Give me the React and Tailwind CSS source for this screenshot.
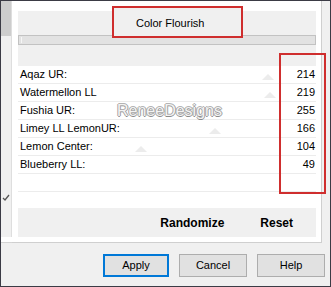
import React from "react";

const rows = [
  { label: "Aqaz UR:", value: "214", tri: 268 },
  { label: "Watermellon LL", value: "219", tri: 270 },
  { label: "Fushia UR:", value: "255", tri: null },
  { label: "Limey LL LemonUR:", value: "166", tri: 215 },
  { label: "Lemon Center:", value: "104", tri: 141 },
  { label: "Blueberry LL:", value: "49", tri: null },
  { label: "", value: "", tri: null },
];

function Tri({ cx }) {
  return (
    <svg
      className="absolute bottom-[3px]"
      style={{ left: cx - 18 - 6 }}
      width="12"
      height="6"
      viewBox="0 0 12 6"
    >
      <polygon points="0,6 6,0 12,6" fill="#ececec" />
    </svg>
  );
}

export default function App() {
  return (
    <div className="relative w-[331px] h-[287px] bg-[#f0f0f0] border border-[#3b3b45] flex flex-col overflow-hidden font-['Liberation_Sans',Arial,sans-serif] text-black">
      {/* top section */}
      <div className="flex h-[242px]">
        {/* left strip */}
        <div className="w-[10px] flex flex-col">
          <div className="h-[35px] bg-[#cdcdcd]" />
          <div className="h-[201px] bg-[#f0f0f0] relative">
            <svg className="absolute left-[1px] top-[158px]" width="8" height="7" viewBox="0 0 8 7">
              <path d="M1 4 L3 6 L7 1" stroke="#555" strokeWidth="1.3" fill="none" />
            </svg>
          </div>
          <div className="flex-1 bg-white border-b border-[#d4d4d4]" />
        </div>
        <div className="w-px flex flex-col">
          <div className="h-[236px] bg-[#dedede]" />
          <div className="flex-1 bg-white border-b border-[#d4d4d4]" />
        </div>
        {/* main */}
        <div className="w-[310px] bg-white border-r border-b border-[#cfcfcf] pl-[6px] pr-[5px] pt-[10px] flex flex-col">
          <div className="bg-[#f0f0f0] h-[24px]" />
          <div className="h-[10px] bg-[#e2e2e2] border border-[#c2c2c2] relative">
            <div className="absolute left-[2px] top-[1px] w-px h-[6px] bg-[#f6f6f6]" />
          </div>
          <div className="bg-[#f0f0f0] h-[21px]" />
          <div className="flex flex-col">
            {rows.map((r, i) => (
              <div
                key={i}
                className="relative h-[18px] border-b border-[#ececec] flex items-center justify-between pl-[2px] pr-[1px] text-[11px] leading-none"
              >
                {r.tri && <Tri cx={r.tri} />}
                <span className="relative">{r.label}</span>
                <span className="relative">{r.value}</span>
              </div>
            ))}
          </div>
          <div className="h-[16px]" />
          <div className="h-[29px] bg-[#f0f0f0] flex items-center justify-end pr-[23px] gap-[36px] text-[12px] font-bold">
            <span>Randomize</span>
            <span>Reset</span>
          </div>
          <div className="flex-1" />
        </div>
        <div className="flex-1 bg-[#f0f0f0]" />
      </div>
      {/* buttons */}
      <div className="flex-1 flex justify-end items-start pt-[11px] pr-[5px] gap-[10px] text-[11px]">
        <button className="w-[66px] h-[23px] bg-[#e1e1e1] border-2 border-[#0078d7] flex items-center justify-center">
          Apply
        </button>
        <button className="w-[68px] h-[23px] bg-[#e1e1e1] border border-[#adadad] flex items-center justify-center">
          Cancel
        </button>
        <button className="w-[68px] h-[23px] bg-[#e1e1e1] border border-[#adadad] flex items-center justify-center">
          Help
        </button>
      </div>

      {/* watermark */}
      <div className="absolute left-[116px] top-[101px] text-[16px] leading-[18px] text-[#f3f3f3] [text-shadow:1px_0_0_#a0a0a0,-1px_0_0_#a8a8a8,0_1px_0_#8a8a8a,0_-1px_0_#b4b4b4]">
        ReneeDesigns
      </div>

      {/* title highlight box */}
      <div className="absolute left-[111px] top-[5px] w-[131px] h-[32px] border-2 border-[#cf2e2e] bg-[#f0f0f0] flex items-center pl-[22px] pt-[2px] text-[11px]">
        Color Flourish
      </div>

      {/* numbers highlight box */}
      <div className="absolute left-[278px] top-[52px] w-[47px] h-[141px] border-2 border-[#cf2e2e]" />
    </div>
  );
}
